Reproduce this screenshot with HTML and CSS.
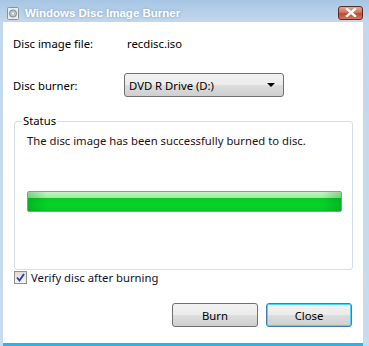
FILE: index.html
```html
<!DOCTYPE html>
<html lang="en">
<head>
    <meta charset="UTF-8">
    <title>Windows Disc Image Burner</title>
    <link rel="stylesheet" href="styles.css">
</head>
<body>
    <div class="window">
        <!-- Title bar -->
        <div class="titlebar">
            <svg class="app-icon" width="12" height="13" viewBox="0 0 12 13">
                <rect x="0.5" y="0.5" width="11" height="12" rx="1" fill="#e8ecef" stroke="#8a9299"/>
                <circle cx="6" cy="6.5" r="3.6" fill="#b9c3c8" stroke="#6f7a80" stroke-width="0.8"/>
                <circle cx="6" cy="6.5" r="1" fill="#fff"/>
            </svg>
            <span class="title">Windows Disc Image Burner</span>
            <span class="closebox">
                <svg width="12" height="9" viewBox="0 0 12 9">
                    <path d="M2 1 L10 8 M10 1 L2 8" stroke="#fff" stroke-width="2.4" stroke-linecap="square"/>
                </svg>
            </span>
        </div>

        <!-- Client area -->
        <div class="client">
            <div class="field-row">
                <span class="label">Disc image file:</span>
                <span>recdisc.iso</span>
            </div>
            <div class="field-row burner-row">
                <span class="label short">Disc burner:</span>
                <div class="dropdown">
                    <span>DVD R Drive (D:)</span>
                    <span class="arrow"></span>
                </div>
            </div>

            <fieldset class="status-box">
                <legend>Status</legend>
                <p class="status-text">The disc image has been successfully burned to disc.</p>
                <div class="progress"><div class="progress-fill"></div></div>
            </fieldset>

            <label class="verify">
                <span class="checkbox">
                    <svg width="9" height="9" viewBox="0 0 9 9">
                        <path d="M1 4.5 L3.5 7.5 L8 1" fill="none" stroke="#2a3f9a" stroke-width="1.8"/>
                    </svg>
                </span>
                Verify disc after burning
            </label>

            <div class="buttons">
                <button class="btn">Burn</button>
                <button class="btn default">Close</button>
            </div>
        </div>
    </div>
</body>
</html>
```

FILE: styles.css
```css
/* Global */
body {
    margin: 0;
    font-family: 'Noto Sans', 'Liberation Sans', sans-serif;
    font-size: 11.3px;
    color: #000;
    background: #fff;
}

/* Window frame */
.window {
    width: 369px;
    height: 346px;
    display: flex;
    flex-direction: column;
    background: linear-gradient(#a7c6e4, #c3d8ed 22px, #c9dcee);
    overflow: hidden;
}

.titlebar {
    height: 22px;
    display: flex;
    align-items: center;
    padding: 0 6px 0 7px;
    flex-shrink: 0;
}

.app-icon {
    margin-top: 4px;
}

.title {
    margin-left: 6px;
    margin-top: 3px;
    color: #fff;
    font-weight: bold;
    font-size: 11.5px;
    font-family: 'Liberation Sans', sans-serif;
    text-shadow: 0 0 3px #7f9fc2, 0 0 2px #b9d0e8;
    flex: 1;
}

.closebox {
    width: 25px;
    height: 14px;
    margin-top: 3px;
    border: 1px solid #5c2b25;
    border-radius: 3px;
    background: linear-gradient(#e7a596, #d06a55 50%, #c24730 55%, #d6765c);
    display: flex;
    align-items: center;
    justify-content: center;
    box-sizing: border-box;
}

/* Client area */
.client {
    flex: 1;
    margin: 0 6px 0 3px;
    background: #fff;
    border-bottom: 3px solid #31b2e3;
    padding: 12px 0 0 10px;
    display: flex;
    flex-direction: column;
}

.field-row {
    display: flex;
    align-items: center;
    height: 18px;
}

.label {
    width: 114px;
}

.label.short {
    width: 111px;
}

.burner-row {
    margin-top: 21px;
    height: 24px;
}

.dropdown {
    width: 160px;
    height: 24px;
    box-sizing: border-box;
    border: 1px solid #707070;
    border-radius: 3px;
    background: linear-gradient(#f2f2f2, #ebebeb 50%, #dddddd 51%, #cfcfcf);
    display: flex;
    align-items: center;
    justify-content: space-between;
    padding: 0 8px 0 4px;
}

.arrow {
    width: 0;
    height: 0;
    border-left: 4px solid transparent;
    border-right: 4px solid transparent;
    border-top: 4px solid #000;
}

/* Status group */
.status-box {
    margin: 16px 0 0 1px;
    width: 339px;
    height: 157px;
    box-sizing: border-box;
    border: 1px solid #d5dfe5;
    border-radius: 3px;
    padding: 0 0 0 12px;
}

.status-box legend {
    padding: 0 1px;
    margin-left: -5px;
    line-height: 16px;
}

.status-text {
    margin: 4px 0 0 0;
    line-height: 16px;
    color: #2a1010;
}

.progress {
    margin-top: 42px;
    width: 315px;
    height: 21px;
    box-sizing: border-box;
    border: 1px solid #8e9a91;
    border-radius: 2px;
    background: #e6e6e6;
}

.progress-fill {
    height: 100%;
    background:
        linear-gradient(90deg, rgba(0, 100, 20, 0.25), transparent 6%, transparent 94%, rgba(0, 100, 20, 0.25)),
        linear-gradient(#c4f5c4, #9eec9e 30%, #06c928 32%, #04d526 70%, #10c030);
}

/* Checkbox row */
.verify {
    display: flex;
    align-items: center;
    margin-top: 0;
    height: 14px;
    color: #101030;
}

.checkbox {
    width: 13px;
    height: 13px;
    box-sizing: border-box;
    border: 1px solid #8f8f8f;
    background: linear-gradient(#dcdcdc, #f6f6f6);
    display: flex;
    align-items: center;
    justify-content: center;
    margin: 0 4px 0 1px;
}

/* Buttons */
.buttons {
    display: flex;
    justify-content: flex-end;
    gap: 8px;
    margin: 19px 11px 0 0;
}

.btn {
    width: 86px;
    height: 24px;
    font: inherit;
    color: #000;
    border: 1px solid #707070;
    border-radius: 3px;
    background: linear-gradient(#f2f2f2, #ebebeb 50%, #dddddd 51%, #cfcfcf);
    padding: 0;
}

.btn.default {
    border-color: #3c7fb1;
    box-shadow: inset 0 0 0 1px #48d4ff;
}
```
